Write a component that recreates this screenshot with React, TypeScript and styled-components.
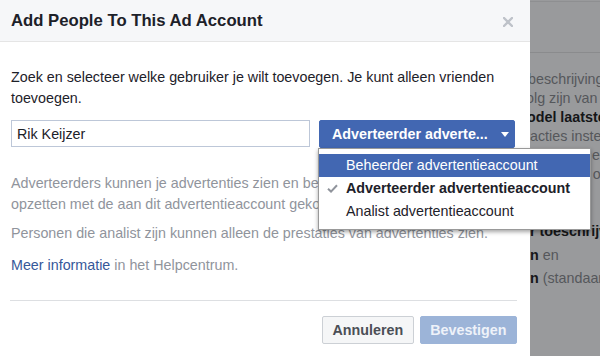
import React, { FC } from 'react';
import styled, { createGlobalStyle } from 'styled-components';

const GlobalStyle = createGlobalStyle`
  html, body {
    margin: 0;
    padding: 0;
    background: #999a9c;
    font-family: 'Liberation Sans', Arial, Helvetica, sans-serif;
  }
`;

const Page = styled.div`
  width: 600px;
  height: 356px;
  display: flex;
  overflow: hidden;
  position: relative;
`;

const Dialog = styled.div`
  width: 530px;
  flex: none;
  height: 100%;
  background: #ffffff;
  display: flex;
  flex-direction: column;
  position: relative;
  z-index: 2;
`;

const Header = styled.div`
  height: 41px;
  flex: none;
  background: #f6f7f9;
  border-bottom: 1px solid #e5e5e5;
  display: flex;
  align-items: center;
  justify-content: space-between;
  padding: 0 17px 0 11px;
`;

const Title = styled.h2`
  margin: 0;
  font-size: 16.7px;
  font-weight: bold;
  color: #1d2129;
  line-height: 20px;
`;

const CloseButton = styled.span`
  display: flex;
  cursor: pointer;
  margin-top: 2px;
`;

const Body = styled.div`
  padding: 25px 15px 0 11px;
  display: flex;
  flex-direction: column;
`;

const Text = styled.p<{ $muted?: boolean; $gap?: number }>`
  margin: ${({ $gap }) => $gap ?? 0}px 0 0 0;
  font-size: 14.3px;
  line-height: 20.5px;
  color: ${({ $muted }) => ($muted ? '#90949c' : '#1d2129')};
`;

const Link = styled.a`
  color: #365899;
  text-decoration: none;
  cursor: pointer;
`;

const PickerRow = styled.div`
  display: flex;
  align-items: flex-start;
  gap: 9px;
  margin-top: 12px;
`;

const NameInput = styled.input`
  box-sizing: border-box;
  width: 299px;
  height: 27px;
  border: 1px solid #bdc7d8;
  padding: 0 5px;
  font-family: inherit;
  font-size: 14.3px;
  color: #1d2129;
  outline: none;
`;

const Dropdown = styled.div`
  position: relative;
`;

const RoleButton = styled.button`
  box-sizing: border-box;
  width: 196px;
  height: 28px;
  display: flex;
  align-items: center;
  padding: 0 12px;
  background: #4267b2;
  border: 1px solid #4267b2;
  border-radius: 2px;
  color: #ffffff;
  font-family: inherit;
  font-size: 14.3px;
  font-weight: bold;
  white-space: nowrap;
  cursor: pointer;
`;

const Caret = styled.span`
  margin-left: 13px;
  width: 0;
  height: 0;
  border-left: 4px solid transparent;
  border-right: 4px solid transparent;
  border-top: 5px solid #ffffff;
`;

const Menu = styled.ul`
  position: absolute;
  top: 28px;
  left: -1px;
  width: 271px;
  margin: 0;
  padding: 5px 0 6px;
  list-style: none;
  background: #ffffff;
  border: 1px solid rgba(0, 0, 0, 0.4);
  box-shadow: 0 2px 4px rgba(0, 0, 0, 0.35);
  z-index: 10;
`;

const MenuItem = styled.li<{ $active?: boolean; $selected?: boolean }>`
  position: relative;
  height: 23px;
  line-height: 23px;
  padding-left: 27px;
  font-size: 14.3px;
  white-space: nowrap;
  font-weight: ${({ $selected }) => ($selected ? 'bold' : 'normal')};
  background: ${({ $active }) => ($active ? '#4267b2' : 'transparent')};
  color: ${({ $active }) => ($active ? '#ffffff' : '#1d2129')};
`;

const Check = styled.span`
  position: absolute;
  left: 8px;
  top: 7px;
  display: flex;
`;

const Footer = styled.div`
  margin: 25px 13px 0 10px;
  border-top: 1px solid #dddfe2;
  padding-top: 15px;
  display: flex;
  justify-content: flex-end;
  gap: 6px;
`;

const FooterButton = styled.button<{ $primary?: boolean }>`
  height: 28px;
  padding: 0 9.5px;
  border-radius: 2px;
  font-family: inherit;
  font-size: 14.3px;
  font-weight: bold;
  cursor: pointer;
  border: 1px solid ${({ $primary }) => ($primary ? '#9cb4d8' : '#ccd0d5')};
  background: ${({ $primary }) => ($primary ? '#9cb4d8' : '#f5f6f7')};
  color: ${({ $primary }) => ($primary ? '#eef2f9' : '#4b4f56')};
`;

const Backdrop = styled.div`
  flex: 1;
  background: #999a9c;
  overflow: hidden;
  position: relative;
  z-index: 1;
`;

const BackdropBar = styled.div`
  height: 50px;
  border-top: 1px solid #8e8f91;
  border-bottom: 1px solid #8a8b8d;
  margin-top: 1px;
`;

const BackdropBlock = styled.div<{ $top: number; $line: number }>`
  margin-top: ${({ $top }) => $top}px;
  font-size: 14.3px;
  line-height: ${({ $line }) => $line}px;
  color: #55575b;
  white-space: nowrap;
`;

const BackdropLine = styled.div<{ $shift: number }>`
  margin-left: ${({ $shift }) => -$shift}px;
`;

const Strong = styled.b`
  color: #151618;
`;

const CloseIcon: FC = () => (
  <svg width="10" height="10" viewBox="0 0 10 10">
    <path d="M1 1 L9 9 M9 1 L1 9" stroke="#bec2c9" strokeWidth="2.4" strokeLinecap="round" />
  </svg>
);

const CheckIcon: FC = () => (
  <svg width="11" height="9" viewBox="0 0 11 9">
    <path d="M1 4.8 L4 7.6 L10 1.2" fill="none" stroke="#90949c" strokeWidth="2" />
  </svg>
);

const roles = [
  { label: 'Beheerder advertentieaccount', active: true },
  { label: 'Adverteerder advertentieaccount', selected: true },
  { label: 'Analist advertentieaccount' },
];

const App: FC = () => (
  <>
    <GlobalStyle />
    <Page>
      <Dialog>
        <Header>
          <Title>Add People To This Ad Account</Title>
          <CloseButton>
            <CloseIcon />
          </CloseButton>
        </Header>
        <Body>
          <Text>Zoek en selecteer welke gebruiker je wilt toevoegen. Je kunt alleen vrienden toevoegen.</Text>
          <PickerRow>
            <NameInput defaultValue="Rik Keijzer" />
            <Dropdown>
              <RoleButton>
                Adverteerder adverte...
                <Caret />
              </RoleButton>
              <Menu>
                {roles.map((r) => (
                  <MenuItem key={r.label} $active={r.active} $selected={r.selected}>
                    {r.selected ? (
                      <Check>
                        <CheckIcon />
                      </Check>
                    ) : null}
                    {r.label}
                  </MenuItem>
                ))}
              </Menu>
            </Dropdown>
          </PickerRow>
          <Text $muted $gap={25}>
            Adverteerders kunnen je advertenties zien en bewerken en advertenties opzetten met de aan dit advertentieaccount gekoppelde betaalmethode.
          </Text>
          <Text $muted $gap={9}>
            Personen die analist zijn kunnen alleen de prestaties van advertenties zien.
          </Text>
          <Text $muted $gap={11}>
            <Link>Meer informatie</Link> in het Helpcentrum.
          </Text>
        </Body>
        <Footer>
          <FooterButton>Annuleren</FooterButton>
          <FooterButton $primary>Bevestigen</FooterButton>
        </Footer>
      </Dialog>
      <Backdrop>
        <BackdropBar />
        <BackdropBlock $top={17} $line={19}>
          <BackdropLine $shift={2}>beschrijving van</BackdropLine>
          <BackdropLine $shift={4}>olg zijn van de</BackdropLine>
          <BackdropLine $shift={3}>
            <Strong>odel laatste</Strong>
          </BackdropLine>
          <BackdropLine $shift={0}>acties instellen</BackdropLine>
          <BackdropLine $shift={0}>volgende eerste</BackdropLine>
          <BackdropLine $shift={0}>aan deze omzet</BackdropLine>
          <BackdropLine $shift={0}>de klik</BackdropLine>
          <BackdropLine $shift={0}>hebben</BackdropLine>
          <BackdropLine $shift={0}>
            <Strong>r toeschrijving</Strong>
          </BackdropLine>
        </BackdropBlock>
        <BackdropBlock $top={3} $line={23}>
          <BackdropLine $shift={0}>
            <Strong>n</Strong> en
          </BackdropLine>
          <BackdropLine $shift={0}>
            <Strong>n</Strong> (standaard)
          </BackdropLine>
        </BackdropBlock>
      </Backdrop>
    </Page>
  </>
);

export default App;
